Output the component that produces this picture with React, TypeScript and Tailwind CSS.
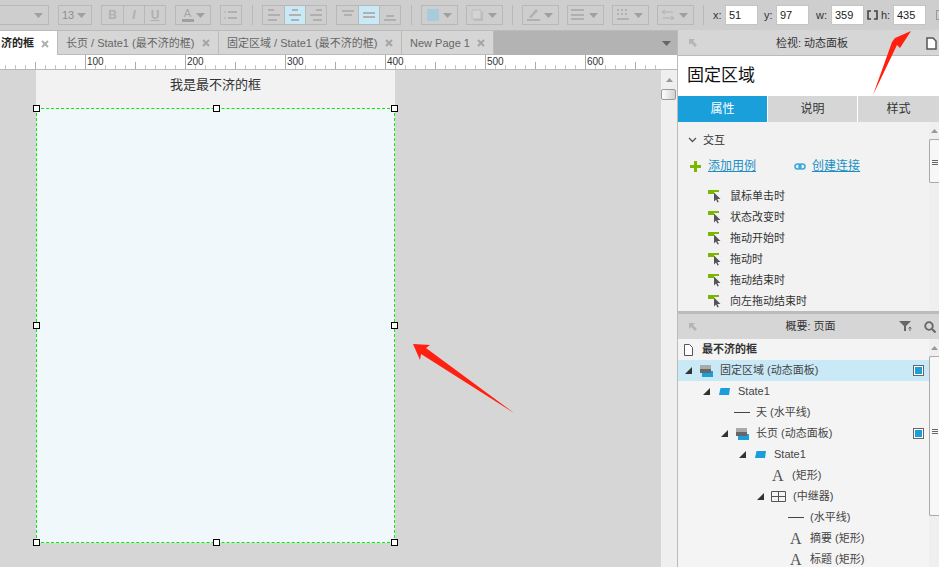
const font = "font-['Liberation_Sans','Noto_Sans_CJK_SC',sans-serif]"

const Caret = ({ className = '' }: { className?: string }) => (
  <svg width="9" height="5" viewBox="0 0 9 5" className={className}>
    <path d="M0 0h9L4.500 5z" fill="#a0a0a0" />
  </svg>
)

const DropButton = ({ width, children }: { width: string; children?: React.ReactNode }) => (
  <div className={`${width} h-[20px] border border-[#b8b8b8] flex items-center justify-between pl-[3px] pr-[5px] shrink-0`}>
    <div className="flex items-center">{children}</div>
    <Caret />
  </div>
)

const Bars = ({ rows }: { rows: [number, number, number][] }) => (
  <svg width="16" height="14" viewBox="0 0 16 14">
    {rows.map(([x, y, w], i) => (
      <rect key={i} x={x} y={y} width={w} height="2" fill="#b0b0b0" />
    ))}
  </svg>
)

const alignGroups = [
  [
    { rows: [[2, 1, 6], [2, 6, 12], [2, 11, 9]] as [number, number, number][] },
    { rows: [[5, 1, 6], [2, 6, 12], [4, 11, 8]] as [number, number, number][], active: true },
    { rows: [[8, 1, 6], [2, 6, 12], [5, 11, 9]] as [number, number, number][] },
  ],
  [
    { rows: [[2, 2, 12], [4, 6, 8]] as [number, number, number][] },
    { rows: [[2, 4, 12], [2, 8, 12]] as [number, number, number][], active: true },
    { rows: [[4, 7, 8], [2, 11, 12]] as [number, number, number][] },
  ],
]

const Divider = () => <div className="w-px h-[20px] bg-[#b8b8b8] shrink-0" />

const Field = ({ label, value, labelWidth }: { label: string; value: string; labelWidth: string }) => (
  <div className="flex items-center shrink-0">
    <span className={`${labelWidth} text-[11px] text-[#333]`}>{label}</span>
    <div className="w-[33px] h-[20px] bg-white text-[11px] text-[#222] leading-[18px] pl-[3px] border border-[#c4c4c4]">{value}</div>
  </div>
)

const Toolbar = () => (
  <div className="h-[30px] bg-[#cecece] flex items-center shrink-0 overflow-hidden [&>*]:shrink-0">
    <DropButton width="w-[50px] -ml-px" />
    <div className="w-[9px]" />
    <DropButton width="w-[34px]"><span className="text-[11px] text-[#8f8f8f]">13</span></DropButton>
    <div className="flex ml-[9px]">
      {['B', 'I', 'U'].map((l, i) => (
        <div
          key={l}
          className={`w-[22px] first:w-[23px] h-[20px] border border-[#b8b8b8] -ml-px first:ml-0 flex items-center justify-center text-[12px] font-bold text-[#b0b0b0] ${i === 1 ? 'italic' : ''} ${i === 2 ? 'underline' : ''}`}
        >
          {l}
        </div>
      ))}
    </div>
    <div className="w-[9px]" />
    <DropButton width="w-[36px]">
      <div className="flex flex-col items-center w-[13px] ml-[2px]">
        <span className="text-[11px] leading-[11px] text-[#a6a6a6]">A</span>
        <div className="w-[12px] h-[3px] bg-[#a0a0a0]" />
      </div>
    </DropButton>
    <div className="w-[22px] h-[20px] border border-[#b8b8b8] ml-[9px] flex items-center justify-center">
      <svg width="14" height="10" viewBox="0 0 14 10">
        <path d="M0 1h2v2H0zM0 7h2v2H0z" fill="#a9c3d1" />
        <path d="M4 1h9v2H4zM4 7h9v2H4z" fill="#b0b0b0" />
      </svg>
    </div>
    <div className="ml-[10px] mr-[9px]"><Divider /></div>
    <div className="flex gap-[9px]">
      {alignGroups.map((group, g) => (
        <div key={g} className="flex">
          {group.map((b, i) => (
            <div
              key={i}
              className={`w-[22px] first:w-[23px] h-[20px] border border-[#b8b8b8] -ml-px first:ml-0 flex items-center justify-center ${b.active ? 'bg-[#c9e9f7]' : ''}`}
            >
              <Bars rows={b.rows} />
            </div>
          ))}
        </div>
      ))}
    </div>
    <div className="ml-[10px] mr-[9px]"><Divider /></div>
    <div className="flex gap-[8px]">
      <DropButton width="w-[37px]"><div className="w-[12px] h-[12px] bg-[#a8cbdc] ml-[2px]" /></DropButton>
      <DropButton width="w-[37px]">
        <svg width="13" height="13" viewBox="0 0 13 13" className="ml-[1px]">
          <path d="M1 1h9v9H1z" fill="#d4d4d4" stroke="#bcbcbc" />
          <path d="M11 3v8H3" fill="none" stroke="#bcbcbc" strokeWidth="2" />
        </svg>
      </DropButton>
    </div>
    <div className="ml-[9px] mr-[9px]"><Divider /></div>
    <div className="flex gap-[8px]">
      <DropButton width="w-[37px]">
        <svg width="16" height="14" viewBox="0 0 16 14">
          <path d="M3 9L10 1l2 2-7 7z" fill="#b0b0b0" />
          <rect x="1" y="11" width="13" height="2" fill="#b0b0b0" />
        </svg>
      </DropButton>
      <DropButton width="w-[37px]">
        <Bars rows={[[0, 1, 13], [0, 6, 13], [0, 10, 13]]} />
      </DropButton>
      <DropButton width="w-[37px]">
        <svg width="14" height="12" viewBox="0 0 14 12">
          <path d="M1 1h12M1 5h12" stroke="#a8a8a8" strokeWidth="1.500" strokeDasharray="2 2" />
          <path d="M1 10h12" stroke="#a8a8a8" strokeWidth="1.500" />
        </svg>
      </DropButton>
      <DropButton width="w-[37px]">
        <svg width="14" height="12" viewBox="0 0 14 12">
          <path d="M2 3h10M2 9h10M4 1L1 3l3 2M10 7l3 2-3 2" stroke="#b0b0b0" fill="none" />
        </svg>
      </DropButton>
    </div>
    <div className="ml-[9px] mr-[9px]"><Divider /></div>
    <Field label="x:" value="51" labelWidth="w-[12px]" />
    <div className="w-[6px]" />
    <Field label="y:" value="97" labelWidth="w-[12px]" />
    <div className="w-[7px]" />
    <Field label="w:" value="359" labelWidth="w-[15px]" />
    <svg width="11" height="10" viewBox="0 0 11 10" className="ml-[3px] mr-[3px]">
      <path d="M4 1H1v8h3M7 1h3v8H7" stroke="#444" strokeWidth="1.600" fill="none" />
    </svg>
    <Field label="h:" value="435" labelWidth="w-[12px]" />
    <div className="w-[10px] h-[10px] border border-[#999] ml-[10px]" />
  </div>
)

const Close = ({ dark }: { dark?: boolean }) => (
  <svg width="8" height="8" viewBox="0 0 8 8">
    <path d="M1 1l6 6M7 1L1 7" stroke={dark ? '#a5a5a5' : '#b0b0b0'} strokeWidth="2" />
  </svg>
)

const tabs = [
  { label: '长页 / State1 (最不济的框)', w: 'w-[161px]' },
  { label: '固定区域 / State1 (最不济的框)', w: 'w-[183px]' },
  { label: 'New Page 1', w: 'w-[92px]' },
]

const TabBar = () => (
  <div className="h-[25px] bg-[#b3b3b3] border-t border-[#bbb] flex items-stretch shrink-0 relative">
    <div className="w-[58px] bg-white border-r border-[#bbb] flex items-center justify-end pr-[8px] pt-px gap-[7px] text-[11px] font-bold text-[#222] overflow-hidden whitespace-nowrap">
      <span>济的框</span>
      <Close />
    </div>
    {tabs.map(t => (
      <div key={t.label} className={`${t.w} bg-[#d6d6d6] border-r border-[#bbb] border-b pt-px flex items-center justify-between px-[8px] text-[11px] text-[#666] whitespace-nowrap`}>
        <span>{t.label}</span>
        <Close dark />
      </div>
    ))}
    <div className="flex-1 flex items-center justify-end pr-[6px]">
      <svg width="9" height="5" viewBox="0 0 9 5"><path d="M0 0h9L4.500 5z" fill="#666" /></svg>
    </div>
  </div>
)

const Ruler = () => {
  const ticks = Array.from({ length: 66 }, (_, i) => 5 + i * 10)
  return (
    <svg width="677" height="15" viewBox="0 0 677 15" className="block shrink-0 bg-white">
      {ticks.map(x => {
        const major = (x + 15) % 100 === 0
        const mid = (x + 15) % 50 === 0
        return <line key={x} x1={x + 0.5} x2={x + 0.5} y1={major ? 0 : mid ? 7 : 10} y2={14} stroke={major || mid ? '#aaa' : '#c4c4c4'} />
      })}
      <rect x="0" y="14" width="677" height="1" fill="#b8b8b8" />
      {[100, 200, 300, 400, 500, 600].map(n => (
        <text key={n} x={n - 15 + 2} y={10} fontSize="10" fill="#333" fontFamily="Liberation Sans">{n}</text>
      ))}
    </svg>
  )
}

const Handle = ({ className }: { className: string }) => (
  <div className={`absolute w-[7px] h-[7px] bg-white border border-black ${className}`} />
)

const Canvas = () => (
  <div className="flex-1 bg-[#d6d6d6] flex min-h-0">
    <div className="flex-1 pl-[36px] min-w-0">
      <div className="w-[359px] h-[38px] pb-[8px] bg-[#f2f2f2] flex items-center justify-center text-[13px] text-[#333]">我是最不济的框</div>
      <div className="w-[359px] h-[435px] bg-[#f0f8fb] relative border border-dashed border-[#00f000]">
        <Handle className="-left-[4px] -top-[4px]" />
        <Handle className="left-[176px] -top-[4px]" />
        <Handle className="-right-[4px] -top-[4px]" />
        <Handle className="-left-[4px] top-[213px]" />
        <Handle className="-right-[4px] top-[213px]" />
        <Handle className="-left-[4px] -bottom-[4px]" />
        <Handle className="left-[176px] -bottom-[4px]" />
        <Handle className="-right-[4px] -bottom-[4px]" />
      </div>
    </div>
    <div className="w-[16px] bg-[#efefef] shrink-0 flex flex-col items-center pt-[8px]">
      <svg width="7" height="4" viewBox="0 0 7 4"><path d="M3.500 0L7 4H0z" fill="#999" /></svg>
      <div className="w-[15px] h-[11px] mt-[7px] -ml-px rounded-[2px] border border-[#9a9a9a] bg-gradient-to-r from-white to-[#d0d0d0]" />
    </div>
  </div>
)

const Back = () => (
  <svg width="10" height="10" viewBox="0 0 10 10">
    <path d="M1 1h6L5 3l4 4-2 2-4-4-2 2z" fill="#b5b5b5" />
  </svg>
)

const EventIcon = () => (
  <svg width="13" height="13" viewBox="0 0 13 13" className="shrink-0">
    <path d="M0 0h11v2H6v2H0z" fill="#7ab800" />
    <path d="M6 2.500v9l2-2 1.500 3 1.300-.6-1.400-2.800H12.500z" fill="#555" />
  </svg>
)

const Grip = () => (
  <div className="flex flex-col gap-px w-[6px]">
    <div className="h-px bg-[#666]" />
    <div className="h-px bg-[#666]" />
    <div className="h-px bg-[#666]" />
  </div>
)

const Scrollbar = ({ thumb, gripTop }: { thumb: string; gripTop: string }) => (
  <div className="w-[10px] bg-[#efefef] shrink-0 flex flex-col items-center pt-[7px]">
    <svg width="7" height="4" viewBox="0 0 7 4"><path d="M3.500 0L7 4H0z" fill="#999" /></svg>
    <div className={`w-[10px] ${thumb} mt-[6px] rounded-l-[2px] border border-r-0 border-[#aaa] bg-[#f7f7f7] flex justify-center ${gripTop}`}>
      <Grip />
    </div>
  </div>
)

const events = ['鼠标单击时', '状态改变时', '拖动开始时', '拖动时', '拖动结束时', '向左拖动结束时']

const Inspector = () => (
  <div className="h-[281px] flex flex-col shrink-0">
    <div className="h-[26px] bg-[#d6d6d6] border-b border-[#bbb] pt-px flex items-center shrink-0 px-[10px]">
      <Back />
      <span className="flex-1 text-center text-[11px] text-[#333]">检视: 动态面板</span>
      <svg width="11" height="13" viewBox="0 0 11 13" className="-mr-[8px]">
        <path d="M1 1h6l3 3v8H1z" fill="#fff" stroke="#555" strokeWidth="1.500" />
      </svg>
    </div>
    <div className="h-[40px] bg-white flex items-center pl-[9px] text-[17px] text-[#111] shrink-0">固定区域</div>
    <div className="h-[26px] flex text-[12px] shrink-0">
      <div className="w-[89px] bg-[#1a9fdb] text-white flex items-center justify-center">属性</div>
      <div className="w-[90px] bg-[#d6d6d6] border-l border-white text-[#333] flex items-center justify-center">说明</div>
      <div className="flex-1 bg-[#d6d6d6] border-l border-white text-[#333] flex items-center justify-center">样式</div>
    </div>
    <div className="flex-1 bg-[#f2f2f2] flex min-h-0">
      <div className="flex-1 min-w-0 overflow-hidden">
        <div className="flex items-center h-[16px] mt-[10px] pl-[10px] gap-[6px] text-[11px] text-[#333]">
          <svg width="9" height="6" viewBox="0 0 9 6"><path d="M1 1l3.500 3.500L8 1" stroke="#555" strokeWidth="1.300" fill="none" /></svg>
          <span>交互</span>
        </div>
        <div className="flex items-center h-[18px] mt-[9px] pl-[12px] text-[12px] text-[#1a8fc4]">
          <svg width="11" height="11" viewBox="0 0 11 11"><path d="M4 0h3v4h4v3H7v4H4V7H0V4h4z" fill="#7ab800" /></svg>
          <span className="underline ml-[7px]">添加用例</span>
          <svg width="12" height="7" viewBox="0 0 12 7" className="ml-[38px]">
            <rect x="1" y="1" width="6" height="5" rx="2.500" fill="none" stroke="#3aa7dc" strokeWidth="1.500" />
            <rect x="5" y="1" width="6" height="5" rx="2.500" fill="none" stroke="#3aa7dc" strokeWidth="1.500" />
          </svg>
          <span className="underline ml-[6px]">创建连接</span>
        </div>
        <div className="mt-[16px] flex flex-col gap-[10px]">
          {events.map(e => (
            <div key={e} className="flex items-center h-[11px] pl-[30px] gap-[9px] text-[11px] text-[#333] whitespace-nowrap">
              <EventIcon />
              <span>{e}</span>
            </div>
          ))}
        </div>
      </div>
      <Scrollbar thumb="h-[44px]" gripTop="pt-[20px]" />
    </div>
  </div>
)

const Layers = () => (
  <svg width="14" height="12" viewBox="0 0 14 12" className="shrink-0">
    <rect x="3" y="6" width="11" height="6" fill="#1a9fdb" />
    <rect x="1" y="3" width="11" height="5" fill="#666" />
    <rect x="1" y="0" width="11" height="4" fill="#aaa" />
  </svg>
)

const Flag = () => (
  <svg width="11" height="7" viewBox="0 0 11 7" className="shrink-0"><path d="M1.500 0H11l-1 7H0z" fill="#1a9fdb" /></svg>
)

const LetterA = () => <span className="w-[13px] text-[16px] leading-none text-[#555] font-['Liberation_Serif',serif] shrink-0">A</span>

const Line = () => <div className="w-[16px] h-px bg-[#444] shrink-0" />

const Grid = () => (
  <svg width="15" height="11" viewBox="0 0 15 11" className="shrink-0">
    <path d="M.5.5h14v10H.5zM.5 5.500h14M7.500.5v10" fill="none" stroke="#555" />
  </svg>
)

const Tick = () => (
  <svg width="7" height="7" viewBox="0 0 7 7" className="shrink-0"><path d="M7 0v7H0z" fill="#333" /></svg>
)

const Marker = () => (
  <div className="w-[11px] h-[11px] border border-[#666] bg-white flex items-center justify-center shrink-0">
    <div className="w-[7px] h-[7px] bg-[#1a9fdb]" />
  </div>
)

type Row = { label: string; pad: string; tick?: boolean; icon?: React.ReactNode; gap?: string; marker?: boolean; selected?: boolean }

const rows: Row[] = [
  { label: '固定区域 (动态面板)', pad: 'pl-[7px]', tick: true, icon: <Layers />, gap: 'gap-[7px]', marker: true, selected: true },
  { label: 'State1', pad: 'pl-[25px]', tick: true, icon: <Flag />, gap: 'gap-[8px] ml-[2px]' },
  { label: '天 (水平线)', pad: 'pl-[56px]', icon: <Line />, gap: 'gap-[6px]' },
  { label: '长页 (动态面板)', pad: 'pl-[43px]', tick: true, icon: <Layers />, gap: 'gap-[7px]', marker: true },
  { label: 'State1', pad: 'pl-[61px]', tick: true, icon: <Flag />, gap: 'gap-[8px] ml-[2px]' },
  { label: '(矩形)', pad: 'pl-[94px]', icon: <LetterA />, gap: 'gap-[7px]' },
  { label: '(中继器)', pad: 'pl-[79px]', tick: true, icon: <Grid />, gap: 'gap-[7px]' },
  { label: '(水平线)', pad: 'pl-[110px]', icon: <Line />, gap: 'gap-[6px]' },
  { label: '摘要 (矩形)', pad: 'pl-[112px]', icon: <LetterA />, gap: 'gap-[7px]' },
  { label: '标题 (矩形)', pad: 'pl-[112px]', icon: <LetterA />, gap: 'gap-[7px]' },
]

const Outline = () => (
  <div className="flex-1 flex flex-col min-h-0 border-t-[3px] border-[#bbb]">
    <div className="h-[25px] bg-[#d6d6d6] flex items-center px-[10px] shrink-0">
      <Back />
      <span className="flex-1 text-center text-[11px] text-[#333] pl-[24px]">概要: 页面</span>
      <svg width="14" height="11" viewBox="0 0 14 11" className="mr-[11px]">
        <path d="M0 0h12L7 5v5H5V5z" fill="#666" />
        <path d="M11 10V6M9.500 7.500L11 6l1.500 1.500" stroke="#666" fill="none" />
      </svg>
      <svg width="12" height="12" viewBox="0 0 12 12" className="-mr-[7px]">
        <circle cx="5" cy="5" r="3.800" fill="none" stroke="#666" strokeWidth="1.800" />
        <path d="M8 8l3.500 3.500" stroke="#666" strokeWidth="2" />
      </svg>
    </div>
    <div className="flex-1 bg-[#f4f4f4] flex min-h-0 overflow-hidden">
      <div className="flex-1 min-w-0">
        <div className="h-[21px] flex items-center pl-[6px] gap-[9px] text-[11px] font-bold text-[#333]">
          <svg width="9" height="12" viewBox="0 0 9 12"><path d="M.5.5h5l3 3v8H.5z" fill="#fff" stroke="#555" /></svg>
          <span>最不济的框</span>
        </div>
        {rows.map(r => (
          <div key={r.label + r.pad} className={`h-[21px] flex items-center text-[11px] text-[#444] whitespace-nowrap ${r.pad} ${r.selected ? 'bg-[#c9e9f7]' : ''}`}>
            {r.tick && <div className="mr-[7px] flex"><Tick /></div>}
            <div className={`flex items-center ${r.gap}`}>
              {r.icon}
              <span>{r.label}</span>
            </div>
            {r.marker && <div className="ml-auto mr-[5px] flex"><Marker /></div>}
          </div>
        ))}
      </div>
      <Scrollbar thumb="h-[160px]" gripTop="pt-[72px]" />
    </div>
  </div>
)

const App = () => (
  <div className={`w-[939px] h-[567px] relative overflow-hidden flex flex-col bg-[#d6d6d6] ${font}`}>
    <Toolbar />
    <div className="flex-1 flex min-h-0">
      <div className="w-[677px] flex flex-col shrink-0">
        <TabBar />
        <Ruler />
        <Canvas />
      </div>
      <div className="flex-1 flex flex-col min-w-0 border-l border-[#bbb]">
        <Inspector />
        <Outline />
      </div>
    </div>
    {/* red annotation arrows */}
    <svg width="939" height="567" viewBox="0 0 939 567" className="absolute left-0 top-0 pointer-events-none">
      <path d="M413 344L430 345L426 348L514 413L421 354L420 360z" fill="#ff2010" />
      <path d="M911 31L900 48L897 45L873 95L892 42L895 38z" fill="#ff2010" />
    </svg>
  </div>
)

export default App
